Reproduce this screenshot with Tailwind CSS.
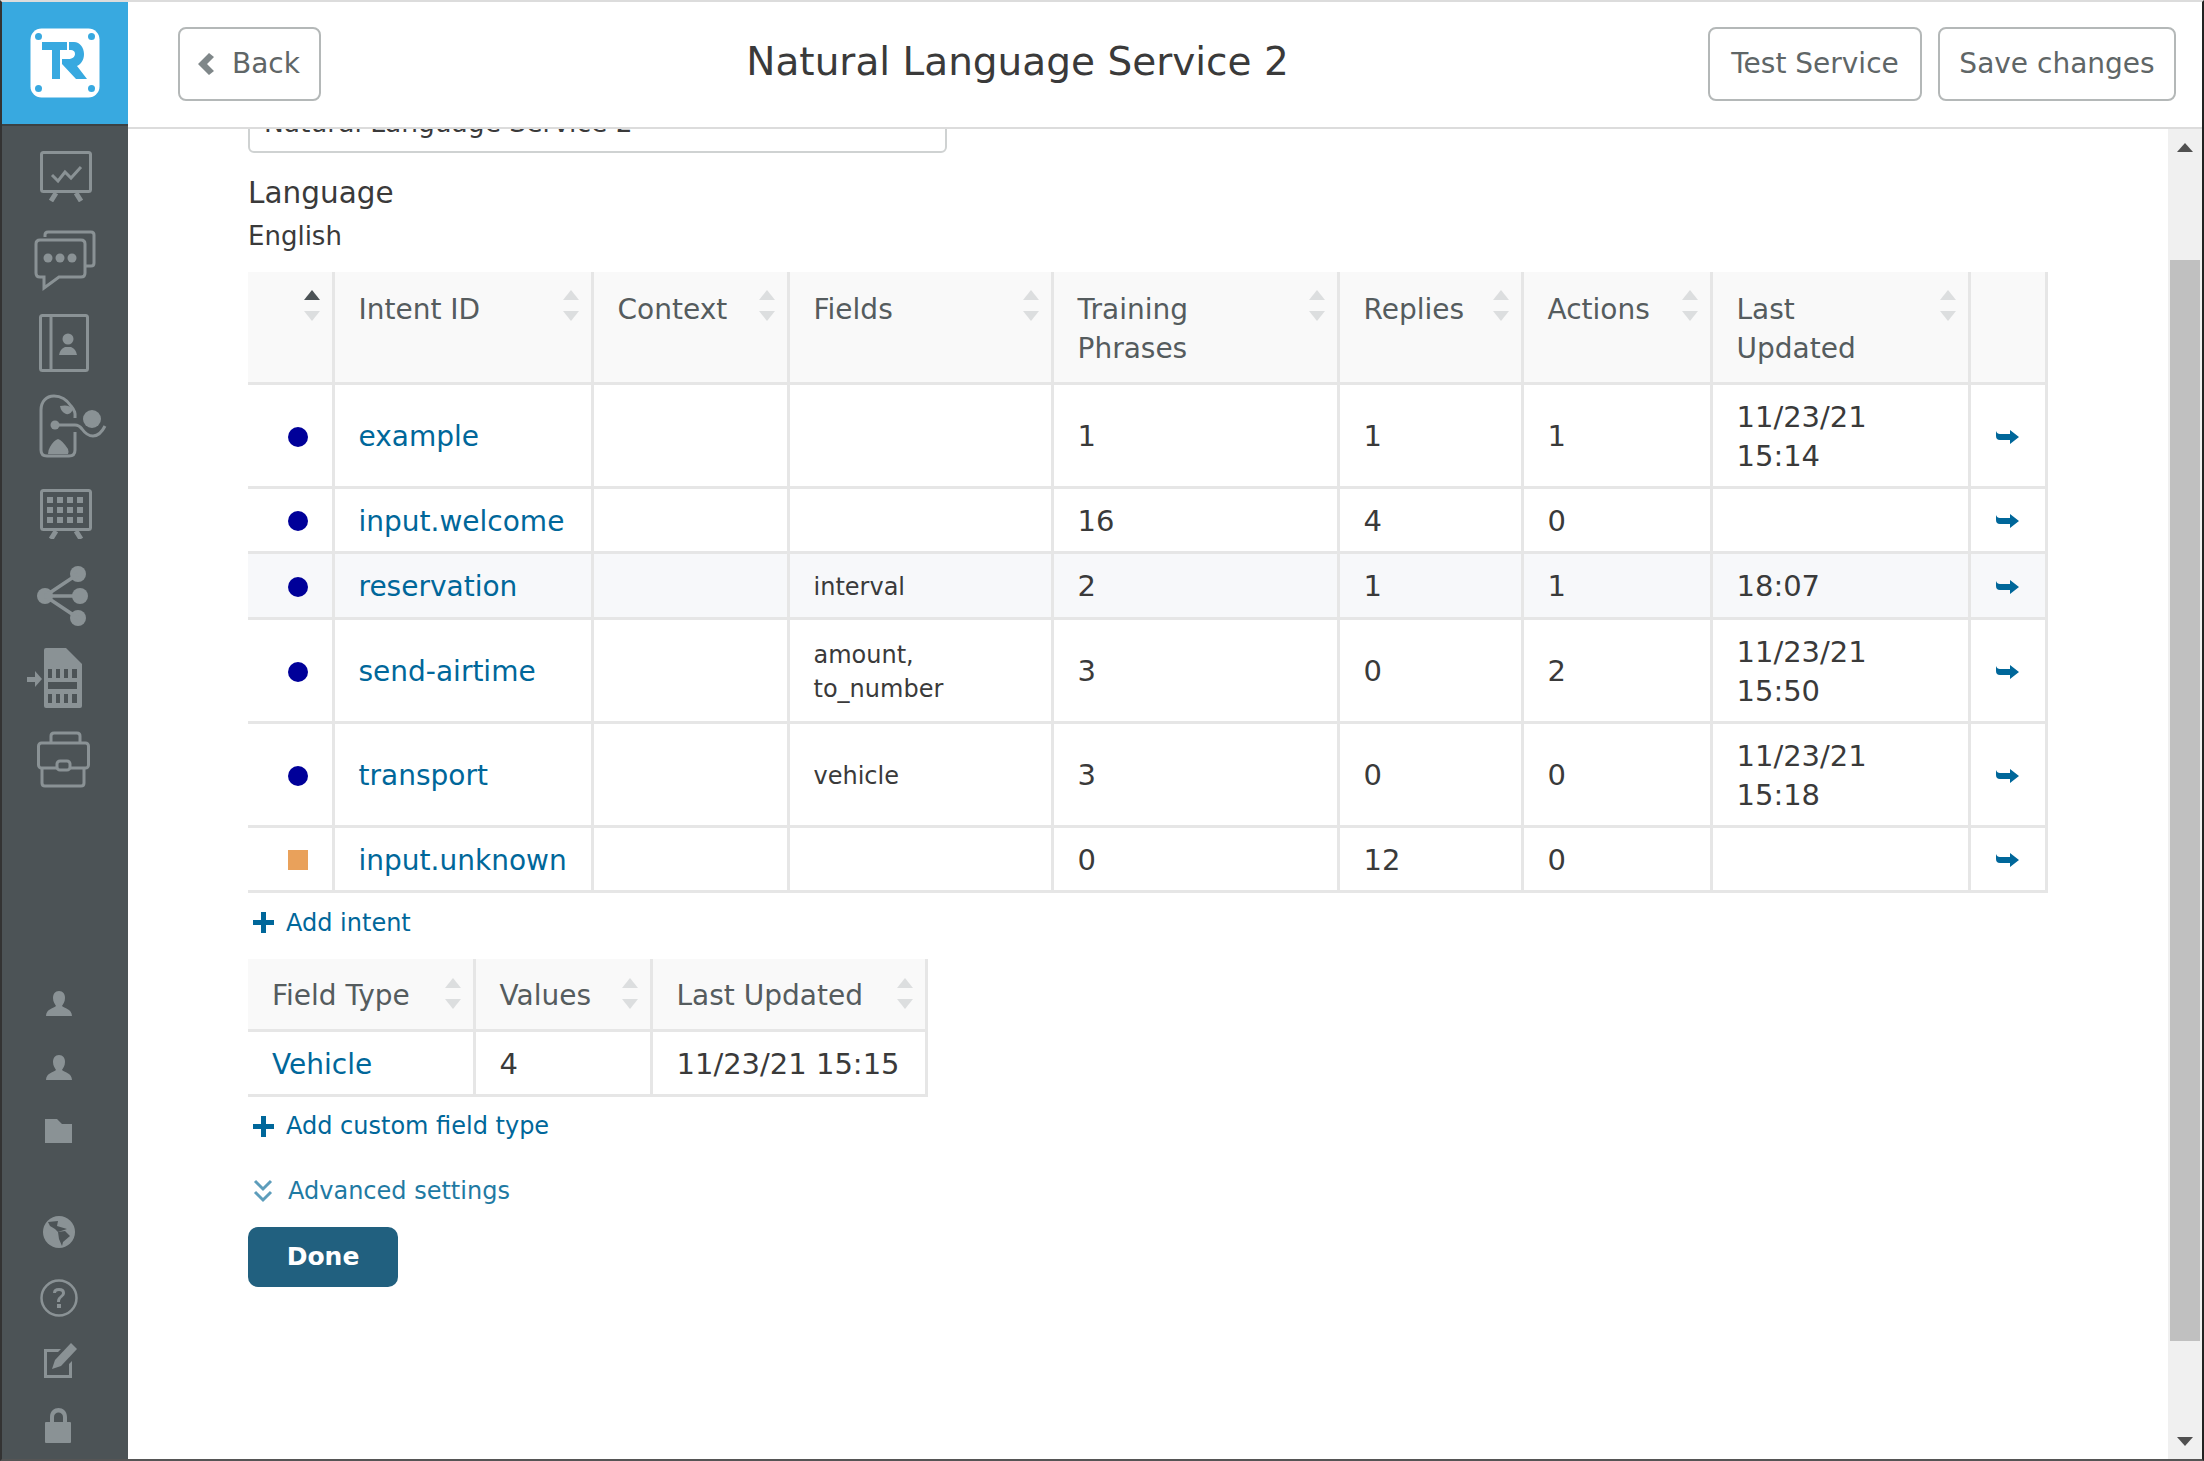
<!DOCTYPE html>
<html lang="en">
<head>
    <meta charset="UTF-8">
    <title>Natural Language Service 2</title>
    <script src="https://cdn.jsdelivr.net/npm/@tailwindcss/browser@4"></script>
</head>
<body class="bg-white">
<div class="flex w-[2204px] h-[1461px] overflow-hidden font-['DejaVu_Sans',Verdana,sans-serif] text-[#3a3a3a] border-t-2 border-b-2 border-l-2 border-r-2 border-t-[#dcdcdc] border-b-[#555] border-l-[#333] border-r-[#222]">

    <!-- sidebar -->
    <aside class="w-[126px] shrink-0 bg-[#4c5356] flex flex-col">
        <div class="h-[122px] bg-[#38a9e0] flex items-center justify-center">
            <svg class="w-[70px] h-[70px]" viewBox="0 0 70 70">
                <rect x="0.5" y="0.5" width="69" height="69" rx="11" fill="#fff"/>
                <circle cx="8.5" cy="8.5" r="3.5" fill="#38a9e0"/><circle cx="61.5" cy="8.5" r="3.5" fill="#38a9e0"/>
                <circle cx="8.5" cy="60.5" r="3.5" fill="#38a9e0"/><circle cx="61.5" cy="60.5" r="3.5" fill="#38a9e0"/>
                <path d="M12 14H37V22H30V51H22V22H12Z" fill="#38a9e0"/>
                <path d="M39 14H44C50 14 54 20 54 26C54 32 51 36 47 38L57 51H46L32 36V31H38C42 31 45 29 45 26C45 23 43 22 41 22H39Z" fill="#38a9e0"/>
            </svg>
        </div>
        <div class="h-[2px] bg-[#3b4143]"></div>

        <svg class="ml-[38px] mt-[25px] w-[52px] h-[51px] block" viewBox="0 0 52 51" fill="none" stroke="#8a9295" stroke-width="3">
            <rect x="1.5" y="1.5" width="49" height="39" rx="2"/>
            <path d="M12 24l6 6 7-9 6 6 10-11"/>
            <path d="M16 42l-5 8M36 42l5 8" stroke-width="5"/>
        </svg>
        <svg class="ml-[32px] mt-[28px] w-[62px] h-[61px] block" viewBox="0 0 62 61" fill="none" stroke="#8a9295" stroke-width="3">
            <path d="M11 7V5q0-3 3-3H57q3 0 3 3V33q0 3-3 3H52"/>
            <path d="M6 10H47q4 0 4 4V43q0 4-4 4H25L10 58V47H6q-4 0-4-4V14q0-4 4-4Z"/>
            <circle cx="14" cy="28" r="4.5" fill="#8a9295" stroke="none"/>
            <circle cx="26" cy="28" r="4.5" fill="#8a9295" stroke="none"/>
            <circle cx="38" cy="28" r="4.5" fill="#8a9295" stroke="none"/>
        </svg>
        <svg class="ml-[37px] mt-[23px] w-[50px] h-[58px] block" viewBox="0 0 50 58" fill="none" stroke="#8a9295" stroke-width="3">
            <rect x="1.5" y="1.5" width="47" height="55" rx="2"/>
            <path d="M12 2V56"/>
            <circle cx="29" cy="25" r="5.5" fill="#8a9295" stroke="none"/>
            <path d="M20 41q1-6 6-8h6q5 2 6 8Z" fill="#8a9295" stroke="none"/>
        </svg>
        <svg class="ml-[37px] mt-[22px] w-[68px] h-[66px] block" viewBox="0 0 68 66" fill="none" stroke="#8a9295" stroke-width="3">
            <path d="M36 24C36 20 37 18 32 12C28 6 22 2 15 2C7 2 2 8 2 16V56q0 6 6 6H30q6 0 6-6V38"/>
            <path d="M21 12q9-2 13 3q-2 6-7 5q-5-2-6-8Z" fill="#8a9295" stroke="none"/>
            <circle cx="16" cy="31" r="4.5" fill="#8a9295" stroke="none"/>
            <path d="M16 31H36q4 0 7 4q5 7 11 7q7 0 12-10"/>
            <circle cx="53" cy="25" r="9" fill="#8a9295" stroke="none"/>
            <path d="M9 60q0-4 2-7q4-7 8-8q4 1 10 10q1 3 0 5Z" fill="#8a9295" stroke="none"/>
        </svg>
        <svg class="ml-[38px] mt-[29px] w-[52px] h-[50px] block" viewBox="0 0 52 50" fill="#8a9295">
            <rect x="1.5" y="1.5" width="49" height="39" rx="2" fill="none" stroke="#8a9295" stroke-width="3"/>
            <path d="M7 8h6v6H7zM17 8h6v6h-6zM27 8h6v6h-6zM37 8h6v6h-6zM7 18h6v6H7zM17 18h6v6h-6zM27 18h6v6h-6zM37 18h6v6h-6zM7 28h6v6H7zM17 28h6v6h-6zM27 28h6v6h-6zM37 28h6v6h-6z"/>
            <path d="M16 42l-5 8M36 42l5 8" stroke="#8a9295" stroke-width="5" fill="none"/>
        </svg>
        <svg class="ml-[35px] mt-[27px] w-[52px] h-[60px] block" viewBox="0 0 52 60" fill="#8a9295" stroke="#8a9295">
            <circle cx="8" cy="30" r="8" stroke="none"/><circle cx="41" cy="8" r="8" stroke="none"/>
            <circle cx="43" cy="30" r="8" stroke="none"/><circle cx="41" cy="52" r="8" stroke="none"/>
            <path d="M8 30L41 8M8 30H43M8 30L41 52" stroke-width="3.5" fill="none"/>
        </svg>
        <svg class="ml-[25px] mt-[22px] w-[56px] h-[60px] block" viewBox="0 0 56 60" fill="#8a9295">
            <path d="M19 0H39L55 16V58q0 2-2 2H19q-2 0-2-2V2q0-2 2-2Z"/>
            <path d="M0 29H8V23L15 31L8 39V34H0Z"/>
            <g fill="#4c5356">
                <path d="M21 21h4v9h-4zM29 21h4v9h-4zM37 21h4v9h-4zM45 21h5v9h-5z"/>
                <path d="M21 34h29v7H21z"/>
                <path d="M21 46h4v9h-4zM29 46h4v9h-4zM37 46h4v9h-4zM45 46h5v9h-5z"/>
            </g>
        </svg>
        <svg class="ml-[35px] mt-[23px] w-[54px] h-[57px] block" viewBox="0 0 54 57" fill="none" stroke="#8a9295" stroke-width="3">
            <path d="M14 12V5q0-3 3-3H40q3 0 3 3v7"/>
            <rect x="1.5" y="12" width="50" height="25" rx="3"/>
            <path d="M5 37V52q0 3 3 3H44q3 0 3-3V37"/>
            <rect x="20" y="30" width="13" height="9" rx="3" fill="#4c5356"/>
        </svg>

        <div class="mt-auto pb-[16px] flex flex-col">
            <svg class="ml-[44px] w-[26px] h-[25px] block" viewBox="0 0 26 25" fill="#8a9295">
                <path d="M13 0c4 0 6 3 6 7s-2 6-3 8c2 2 10 3 10 10H0c0-7 8-8 10-10-1-2-3-4-3-8s2-7 6-7Z"/>
            </svg>
            <svg class="ml-[44px] mt-[39px] w-[26px] h-[25px] block" viewBox="0 0 26 25" fill="#8a9295">
                <path d="M13 0c4 0 6 3 6 7s-2 6-3 8c2 2 10 3 10 10H0c0-7 8-8 10-10-1-2-3-4-3-8s2-7 6-7Z"/>
            </svg>
            <svg class="ml-[43px] mt-[39px] w-[28px] h-[24px] block" viewBox="0 0 28 24" fill="#8a9295">
                <path d="M0 0H12L17 5H27V24H0Z"/>
            </svg>
            <svg class="ml-[41px] mt-[73px] w-[32px] h-[32px] block" viewBox="0 0 32 32">
                <circle cx="16" cy="16" r="16" fill="#8a9295"/>
                <path d="M5 6L15 5L14 10L24 13L15 16L12 13L7 10Z" fill="#4c5356"/>
                <path d="M15 16L22 15L27 20L20 26L19 30L16 23Z" fill="#4c5356"/>
            </svg>
            <svg class="ml-[38px] mt-[31px] w-[38px] h-[38px] block" viewBox="0 0 38 38">
                <circle cx="19" cy="19" r="17.5" fill="none" stroke="#8a9295" stroke-width="2.5"/>
                <path d="M13 14q0-5 6-5t6 5c0 4-5 4-5 9h-3c0-6 5-6 5-9q0-2-3-2t-3 2Z" fill="#8a9295"/>
                <rect x="17" y="25" width="4" height="4" fill="#8a9295"/>
            </svg>
            <svg class="ml-[40px] mt-[26px] w-[36px] h-[36px] block" viewBox="0 0 36 36" fill="#8a9295">
                <path d="M2 6H19L16 9H5V32H27V21L30 18V35H2Z"/>
                <path d="M29 0l6 6-16 17-9 3 3-9Z"/>
            </svg>
            <svg class="ml-[43px] mt-[29px] w-[27px] h-[35px] block" viewBox="0 0 27 35" fill="#8a9295">
                <path d="M5 14V9c0-12 17-12 17 0v5h-4V9c0-6-9-6-9 0v5Z"/>
                <rect y="14" width="26" height="21" rx="1"/>
            </svg>
        </div>
    </aside>

    <!-- main -->
    <div class="flex-1 flex flex-col min-w-0">
        <header class="h-[127px] shrink-0 bg-white border-b-2 border-[#dcdcdc] flex items-center pl-[50px] pr-[26px] pb-[2px] relative z-10">
            <button class="w-[143px] h-[74px] border-2 border-[#b4b8b8] rounded-[8px] flex items-center text-[#5f6667] text-[28px]">
                <svg class="ml-[18px] mr-[18px] w-[16px] h-[22px]" viewBox="0 0 16 22" fill="#7f8789"><path d="M11 0l5 4-7 7 7 7-5 4L0 11Z"/></svg>
                Back
            </button>
            <h1 class="flex-1 text-center text-[39px] leading-none text-[#3a3a3a] pl-[6px] pb-[4px]">Natural Language Service 2</h1>
            <button class="w-[214px] h-[74px] border-2 border-[#b4b8b8] rounded-[8px] text-[#5f6667] text-[28px]">Test Service</button>
            <button class="w-[238px] h-[74px] ml-[16px] border-2 border-[#b4b8b8] rounded-[8px] text-[#5f6667] text-[28px]">Save changes</button>
        </header>

        <div class="flex-1 flex min-h-0">
            <div class="flex-1 min-w-0 pl-[120px] overflow-hidden">
                <div class="-mt-[40px] w-[699px] h-[64px] border-2 border-[#cfd2d2] rounded-[6px] px-[14px] pt-[4px] flex items-center text-[26.5px]">Natural Language Service 2</div>
                <div class="mt-[21px] text-[29.5px] leading-[38px]">Language</div>
                <div class="mt-[6px] text-[26px] leading-[36px]">English</div>

                <table class="mt-[18px] w-[1798px] table-fixed border-collapse text-[28px] leading-[39px] [&_td]:pt-[3px]">
                    <colgroup>
                        <col class="w-[85px]"><col class="w-[259px]"><col class="w-[196px]"><col class="w-[264px]"><col class="w-[286px]"><col class="w-[184px]"><col class="w-[189px]"><col class="w-[258px]"><col class="w-[77px]">
                    </colgroup>
                    <thead class="bg-[#f9f9f9] text-[#555c5e]">
                        <tr class="h-[111px] align-top border-b-[3px] border-[#e6e6e6]">
                            <th class="border-r-[3px] border-[#e6e6e6] relative font-normal text-left"><svg class="absolute top-[18px] right-[12px] w-[16px] h-[32px]" viewBox="0 0 16 32"><path d="M8 0l8 10H0Z" fill="#4c5356"/><path d="M0 21H16L8 31Z" fill="#dcdedf"/></svg></th>
                            <th class="border-r-[3px] border-[#e6e6e6] relative font-normal text-left px-[24px] pt-[18px]">Intent ID<svg class="absolute top-[18px] right-[12px] w-[16px] h-[32px]" viewBox="0 0 16 32"><path d="M8 0l8 10H0Z" fill="#dcdedf"/><path d="M0 21H16L8 31Z" fill="#dcdedf"/></svg></th>
                            <th class="border-r-[3px] border-[#e6e6e6] relative font-normal text-left px-[24px] pt-[18px]">Context<svg class="absolute top-[18px] right-[12px] w-[16px] h-[32px]" viewBox="0 0 16 32"><path d="M8 0l8 10H0Z" fill="#dcdedf"/><path d="M0 21H16L8 31Z" fill="#dcdedf"/></svg></th>
                            <th class="border-r-[3px] border-[#e6e6e6] relative font-normal text-left px-[24px] pt-[18px]">Fields<svg class="absolute top-[18px] right-[12px] w-[16px] h-[32px]" viewBox="0 0 16 32"><path d="M8 0l8 10H0Z" fill="#dcdedf"/><path d="M0 21H16L8 31Z" fill="#dcdedf"/></svg></th>
                            <th class="border-r-[3px] border-[#e6e6e6] relative font-normal text-left px-[24px] pt-[18px]">Training<br>Phrases<svg class="absolute top-[18px] right-[12px] w-[16px] h-[32px]" viewBox="0 0 16 32"><path d="M8 0l8 10H0Z" fill="#dcdedf"/><path d="M0 21H16L8 31Z" fill="#dcdedf"/></svg></th>
                            <th class="border-r-[3px] border-[#e6e6e6] relative font-normal text-left px-[24px] pt-[18px]">Replies<svg class="absolute top-[18px] right-[12px] w-[16px] h-[32px]" viewBox="0 0 16 32"><path d="M8 0l8 10H0Z" fill="#dcdedf"/><path d="M0 21H16L8 31Z" fill="#dcdedf"/></svg></th>
                            <th class="border-r-[3px] border-[#e6e6e6] relative font-normal text-left px-[24px] pt-[18px]">Actions<svg class="absolute top-[18px] right-[12px] w-[16px] h-[32px]" viewBox="0 0 16 32"><path d="M8 0l8 10H0Z" fill="#dcdedf"/><path d="M0 21H16L8 31Z" fill="#dcdedf"/></svg></th>
                            <th class="border-r-[3px] border-[#e6e6e6] relative font-normal text-left px-[24px] pt-[18px]">Last<br>Updated<svg class="absolute top-[18px] right-[12px] w-[16px] h-[32px]" viewBox="0 0 16 32"><path d="M8 0l8 10H0Z" fill="#dcdedf"/><path d="M0 21H16L8 31Z" fill="#dcdedf"/></svg></th>
                            <th class="border-r-[3px] border-[#e6e6e6]"></th>
                        </tr>
                    </thead>
                    <tbody>
                        <tr class="h-[104px] border-b-[3px] border-[#e6e6e6]">
                            <td class="border-r-[3px] border-[#e6e6e6]"><div class="w-[20px] h-[20px] ml-[40px] rounded-full bg-[#000099]"></div></td>
                            <td class="border-r-[3px] border-[#e6e6e6] px-[24px] text-[#00679a]">example</td>
                            <td class="border-r-[3px] border-[#e6e6e6]"></td>
                            <td class="border-r-[3px] border-[#e6e6e6] px-[24px] text-[24px] leading-[34px]"></td>
                            <td class="border-r-[3px] border-[#e6e6e6] px-[24px] text-[29px]">1</td>
                            <td class="border-r-[3px] border-[#e6e6e6] px-[24px] text-[29px]">1</td>
                            <td class="border-r-[3px] border-[#e6e6e6] px-[24px] text-[29px]">1</td>
                            <td class="border-r-[3px] border-[#e6e6e6] px-[24px] text-[29px]">11/23/21<br>15:14</td>
                            <td class="border-r-[3px] border-[#e6e6e6]"><svg class="w-[23px] h-[14px] mx-auto" viewBox="0 0 23 14" fill="#00679a"><path d="M0 1q1 3 4 3H14V0L23 7L14 14V10H4Q0 10 0 6Z"/></svg></td>
                        </tr>
                        <tr class="h-[65px] border-b-[3px] border-[#e6e6e6]">
                            <td class="border-r-[3px] border-[#e6e6e6]"><div class="w-[20px] h-[20px] ml-[40px] rounded-full bg-[#000099]"></div></td>
                            <td class="border-r-[3px] border-[#e6e6e6] px-[24px] text-[#00679a]">input.welcome</td>
                            <td class="border-r-[3px] border-[#e6e6e6]"></td>
                            <td class="border-r-[3px] border-[#e6e6e6] px-[24px] text-[24px] leading-[34px]"></td>
                            <td class="border-r-[3px] border-[#e6e6e6] px-[24px] text-[29px]">16</td>
                            <td class="border-r-[3px] border-[#e6e6e6] px-[24px] text-[29px]">4</td>
                            <td class="border-r-[3px] border-[#e6e6e6] px-[24px] text-[29px]">0</td>
                            <td class="border-r-[3px] border-[#e6e6e6] px-[24px] text-[29px]"></td>
                            <td class="border-r-[3px] border-[#e6e6e6]"><svg class="w-[23px] h-[14px] mx-auto" viewBox="0 0 23 14" fill="#00679a"><path d="M0 1q1 3 4 3H14V0L23 7L14 14V10H4Q0 10 0 6Z"/></svg></td>
                        </tr>
                        <tr class="h-[66px] border-b-[3px] border-[#e6e6e6] bg-[#f7f8fa]">
                            <td class="border-r-[3px] border-[#e6e6e6]"><div class="w-[20px] h-[20px] ml-[40px] rounded-full bg-[#000099]"></div></td>
                            <td class="border-r-[3px] border-[#e6e6e6] px-[24px] text-[#00679a]">reservation</td>
                            <td class="border-r-[3px] border-[#e6e6e6]"></td>
                            <td class="border-r-[3px] border-[#e6e6e6] px-[24px] text-[24px] leading-[34px]">interval</td>
                            <td class="border-r-[3px] border-[#e6e6e6] px-[24px] text-[29px]">2</td>
                            <td class="border-r-[3px] border-[#e6e6e6] px-[24px] text-[29px]">1</td>
                            <td class="border-r-[3px] border-[#e6e6e6] px-[24px] text-[29px]">1</td>
                            <td class="border-r-[3px] border-[#e6e6e6] px-[24px] text-[29px]">18:07</td>
                            <td class="border-r-[3px] border-[#e6e6e6]"><svg class="w-[23px] h-[14px] mx-auto" viewBox="0 0 23 14" fill="#00679a"><path d="M0 1q1 3 4 3H14V0L23 7L14 14V10H4Q0 10 0 6Z"/></svg></td>
                        </tr>
                        <tr class="h-[104px] border-b-[3px] border-[#e6e6e6]">
                            <td class="border-r-[3px] border-[#e6e6e6]"><div class="w-[20px] h-[20px] ml-[40px] rounded-full bg-[#000099]"></div></td>
                            <td class="border-r-[3px] border-[#e6e6e6] px-[24px] text-[#00679a]">send-airtime</td>
                            <td class="border-r-[3px] border-[#e6e6e6]"></td>
                            <td class="border-r-[3px] border-[#e6e6e6] px-[24px] text-[24px] leading-[34px]">amount,<br>to_number</td>
                            <td class="border-r-[3px] border-[#e6e6e6] px-[24px] text-[29px]">3</td>
                            <td class="border-r-[3px] border-[#e6e6e6] px-[24px] text-[29px]">0</td>
                            <td class="border-r-[3px] border-[#e6e6e6] px-[24px] text-[29px]">2</td>
                            <td class="border-r-[3px] border-[#e6e6e6] px-[24px] text-[29px]">11/23/21<br>15:50</td>
                            <td class="border-r-[3px] border-[#e6e6e6]"><svg class="w-[23px] h-[14px] mx-auto" viewBox="0 0 23 14" fill="#00679a"><path d="M0 1q1 3 4 3H14V0L23 7L14 14V10H4Q0 10 0 6Z"/></svg></td>
                        </tr>
                        <tr class="h-[104px] border-b-[3px] border-[#e6e6e6]">
                            <td class="border-r-[3px] border-[#e6e6e6]"><div class="w-[20px] h-[20px] ml-[40px] rounded-full bg-[#000099]"></div></td>
                            <td class="border-r-[3px] border-[#e6e6e6] px-[24px] text-[#00679a]">transport</td>
                            <td class="border-r-[3px] border-[#e6e6e6]"></td>
                            <td class="border-r-[3px] border-[#e6e6e6] px-[24px] text-[24px] leading-[34px]">vehicle</td>
                            <td class="border-r-[3px] border-[#e6e6e6] px-[24px] text-[29px]">3</td>
                            <td class="border-r-[3px] border-[#e6e6e6] px-[24px] text-[29px]">0</td>
                            <td class="border-r-[3px] border-[#e6e6e6] px-[24px] text-[29px]">0</td>
                            <td class="border-r-[3px] border-[#e6e6e6] px-[24px] text-[29px]">11/23/21<br>15:18</td>
                            <td class="border-r-[3px] border-[#e6e6e6]"><svg class="w-[23px] h-[14px] mx-auto" viewBox="0 0 23 14" fill="#00679a"><path d="M0 1q1 3 4 3H14V0L23 7L14 14V10H4Q0 10 0 6Z"/></svg></td>
                        </tr>
                        <tr class="h-[65px] border-b-[3px] border-[#e6e6e6]">
                            <td class="border-r-[3px] border-[#e6e6e6]"><div class="w-[20px] h-[20px] ml-[40px] bg-[#e9a15b]"></div></td>
                            <td class="border-r-[3px] border-[#e6e6e6] px-[24px] text-[#00679a]">input.unknown</td>
                            <td class="border-r-[3px] border-[#e6e6e6]"></td>
                            <td class="border-r-[3px] border-[#e6e6e6] px-[24px] text-[24px] leading-[34px]"></td>
                            <td class="border-r-[3px] border-[#e6e6e6] px-[24px] text-[29px]">0</td>
                            <td class="border-r-[3px] border-[#e6e6e6] px-[24px] text-[29px]">12</td>
                            <td class="border-r-[3px] border-[#e6e6e6] px-[24px] text-[29px]">0</td>
                            <td class="border-r-[3px] border-[#e6e6e6] px-[24px] text-[29px]"></td>
                            <td class="border-r-[3px] border-[#e6e6e6]"><svg class="w-[23px] h-[14px] mx-auto" viewBox="0 0 23 14" fill="#00679a"><path d="M0 1q1 3 4 3H14V0L23 7L14 14V10H4Q0 10 0 6Z"/></svg></td>
                        </tr>
                    </tbody>
                </table>

                <a class="mt-[11px] h-[38px] flex items-center text-[#00679a] text-[24px]">
                    <svg class="ml-[5px] mr-[12px] w-[21px] h-[21px]" viewBox="0 0 21 21" fill="#00679a"><path d="M8 0h5v8h8v5h-8v8H8v-8H0V8h8Z"/></svg>
                    Add intent
                </a>

                <table class="mt-[17px] w-[678px] table-fixed border-collapse text-[28px] leading-[39px] [&_td]:pt-[3px] [&_th]:pt-[3px]">
                    <colgroup><col class="w-[226px]"><col class="w-[177px]"><col class="w-[275px]"></colgroup>
                    <thead class="bg-[#f9f9f9] text-[#555c5e]">
                        <tr class="h-[72px] border-b-[3px] border-[#e6e6e6]">
                            <th class="border-r-[3px] border-[#e6e6e6] relative font-normal text-left px-[24px]">Field Type<svg class="absolute top-[19px] right-[12px] w-[16px] h-[32px]" viewBox="0 0 16 32"><path d="M8 0l8 10H0Z" fill="#dcdedf"/><path d="M0 21H16L8 31Z" fill="#dcdedf"/></svg></th>
                            <th class="border-r-[3px] border-[#e6e6e6] relative font-normal text-left px-[24px]">Values<svg class="absolute top-[19px] right-[12px] w-[16px] h-[32px]" viewBox="0 0 16 32"><path d="M8 0l8 10H0Z" fill="#dcdedf"/><path d="M0 21H16L8 31Z" fill="#dcdedf"/></svg></th>
                            <th class="border-r-[3px] border-[#e6e6e6] relative font-normal text-left px-[24px]">Last Updated<svg class="absolute top-[19px] right-[12px] w-[16px] h-[32px]" viewBox="0 0 16 32"><path d="M8 0l8 10H0Z" fill="#dcdedf"/><path d="M0 21H16L8 31Z" fill="#dcdedf"/></svg></th>
                        </tr>
                    </thead>
                    <tbody>
                        <tr class="h-[65px] border-b-[3px] border-[#e6e6e6]">
                            <td class="border-r-[3px] border-[#e6e6e6] px-[24px] text-[#00679a]">Vehicle</td>
                            <td class="border-r-[3px] border-[#e6e6e6] px-[24px] text-[29px]">4</td>
                            <td class="border-r-[3px] border-[#e6e6e6] px-[24px] text-[29px]">11/23/21 15:15</td>
                        </tr>
                    </tbody>
                </table>

                <a class="mt-[10px] h-[38px] flex items-center text-[#00679a] text-[24px]">
                    <svg class="ml-[5px] mr-[12px] w-[21px] h-[21px]" viewBox="0 0 21 21" fill="#00679a"><path d="M8 0h5v8h8v5h-8v8H8v-8H0V8h8Z"/></svg>
                    Add custom field type
                </a>
                <a class="mt-[27px] h-[38px] flex items-center text-[#1f7aa3] text-[24px]">
                    <svg class="ml-[5px] mr-[15px] w-[20px] h-[24px]" viewBox="0 0 20 24" fill="none" stroke="#5d9dbb" stroke-width="3"><path d="M2 2l8 8 8-8M2 13l8 8 8-8"/></svg>
                    Advanced settings
                </a>
                <button class="mt-[17px] w-[150px] h-[60px] rounded-[10px] bg-[#21607f] text-white text-[25px] font-bold block">Done</button>
            </div>

            <!-- scrollbar -->
            <div class="w-[34px] shrink-0 bg-[#f0f0f0] flex flex-col items-center">
                <svg class="mt-[14px] w-[16px] h-[9px] shrink-0" viewBox="0 0 16 9" fill="#505050"><path d="M8 0l8 9H0Z"/></svg>
                <div class="mt-[108px] w-[30px] h-[1081px] bg-[#c0c0c0]"></div>
                <svg class="mt-[96px] w-[16px] h-[9px] shrink-0" viewBox="0 0 16 9" fill="#505050"><path d="M0 0H16L8 9Z"/></svg>
            </div>
        </div>
    </div>
</div>
</body>
</html>
